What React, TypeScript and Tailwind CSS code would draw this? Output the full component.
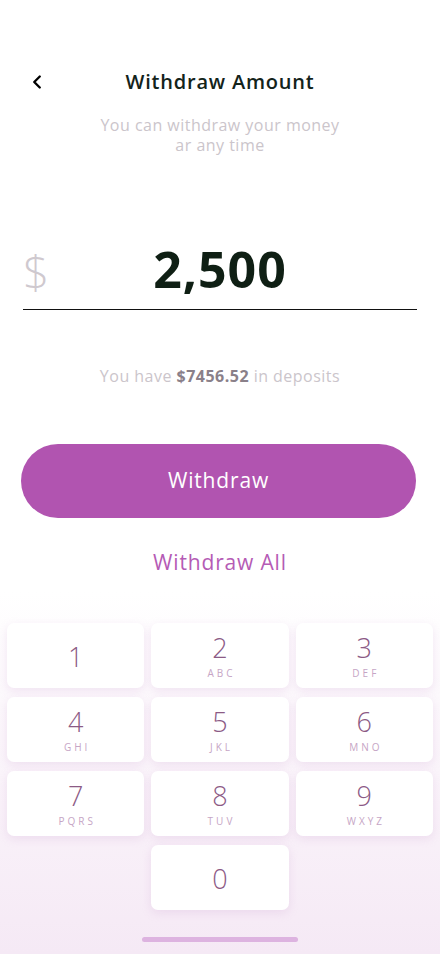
import { ChevronLeft } from "lucide-react";

const keys = [
  { n: "1", l: "" },
  { n: "2", l: "ABC" },
  { n: "3", l: "DEF" },
  { n: "4", l: "GHI" },
  { n: "5", l: "JKL" },
  { n: "6", l: "MNO" },
  { n: "7", l: "PQRS" },
  { n: "8", l: "TUV" },
  { n: "9", l: "WXYZ" },
];

function Key({ n, l }: { n: string; l: string }) {
  return (
    <button className="h-[65px] bg-white rounded-[7px] shadow-[0_3px_10px_rgba(200,150,205,0.22)] flex flex-col items-center justify-center">
      <span className={`text-[27px] font-light leading-none text-[#8c5a85] ${l ? "" : "mt-0.5"}`}>{n}</span>
      {l && <span className="mt-[7px] text-[10px] font-medium leading-none tracking-[0.3em] pl-[0.3em] text-[#c6a5c5]">{l}</span>}
    </button>
  );
}

export default function App() {
  return (
    <main className="w-[440px] h-[954px] bg-gradient-to-b from-white from-[62%] to-[#f5e9f5] font-['Open_Sans',sans-serif] flex flex-col overflow-hidden">
      {/* Header */}
      <div className="relative pt-[69px] flex justify-center">
        <ChevronLeft className="absolute left-[26px] top-[71px] text-black" size={22} strokeWidth={2.6} />
        <h1 className="text-[20px] font-semibold tracking-[0.04em] text-[#13231a] leading-[26px]">Withdraw Amount</h1>
      </div>
      <p className="mt-[20px] text-center text-[16px] tracking-[0.03em] leading-[20px] text-[#cbc5cb]">
        You can withdraw your money <br />ar any time
      </p>

      {/* Amount */}
      <div className="mt-[84px] mx-[23px] border-b border-[#111] relative flex justify-center pb-[10px]">
        <span className="absolute left-0 top-[2px] text-[46px] font-light text-[#cfc9cf] leading-[60px]">$</span>
        <span className="text-[50px] font-bold tracking-[0.02em] text-[#0f1f14] leading-[60px]">2,500</span>
      </div>
      <p className="mt-[54px] text-center text-[16px] tracking-[0.03em] text-[#cbc5cb]">
        You have <span className="font-bold text-[#8a8089]">$7456.52</span> in deposits
      </p>

      {/* Actions */}
      <button className="mt-[56px] ml-[21px] mr-[24px] h-[74px] rounded-full bg-[#b154b0] text-white text-[21px] tracking-[0.04em] font-medium">
        Withdraw
      </button>
      <button className="mt-[30px] text-[21px] font-medium tracking-[0.04em] text-[#b55bb5] leading-[28px]">Withdraw All</button>

      {/* Keypad */}
      <div className="mt-[47px] px-[7px] grid grid-cols-3 gap-x-[7px] gap-y-[9px]">
        {keys.map((k) => (
          <Key key={k.n} n={k.n} l={k.l} />
        ))}
        <div />
        <Key n="0" l="" />
      </div>

      <div className="mt-[27px] mx-auto w-[156px] h-[5px] rounded-full bg-[#ddb3e0]" />
    </main>
  );
}
